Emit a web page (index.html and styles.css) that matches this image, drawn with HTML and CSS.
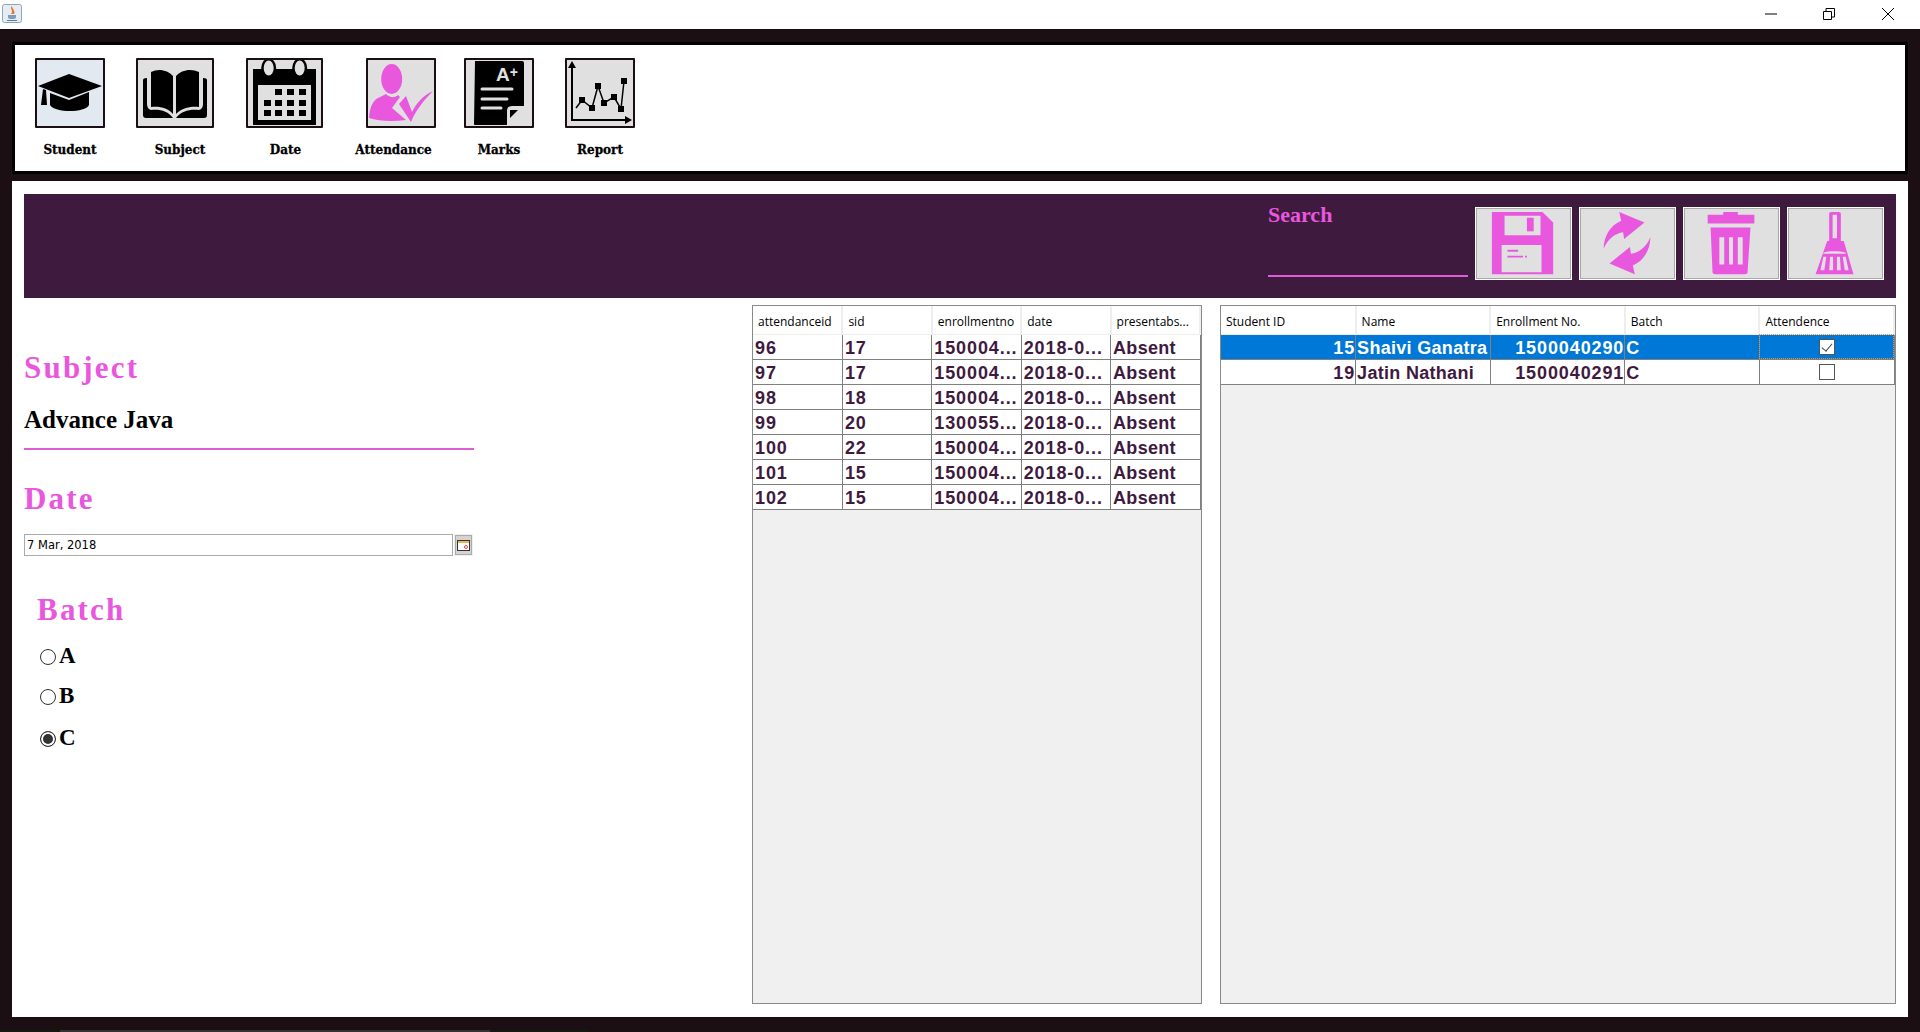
FILE: index.html
```html
<!DOCTYPE html>
<html lang="en">
    <head>
        <meta charset="UTF-8">
        <title>Attendance</title>
        <link rel="stylesheet" href="styles.css">
    </head>
    <body>
        <header class="titlebar">
            <svg class="app-icon" viewBox="0 0 20 19">
                <rect x="0.5" y="0.5" width="19" height="18" rx="2" fill="#e6ecf3" stroke="#8fa5bb"/>
                <path d="M10 2C7 5 12 6 9 10H12C14 7 10 5 10 2Z" fill="#e8782a"/>
                <path d="M6 11H14V13C14 15 12 15 10 15C8 15 6 15 6 13Z" fill="#7d9dbc"/>
                <path d="M5 16.500H15" stroke="#5d7fa0"/>
            </svg>
            <div class="win-controls">
                <svg viewBox="0 0 12 12"><path d="M0 6H12" stroke="#000"/></svg>
                <svg viewBox="0 0 12 12" fill="none" stroke="#000"><path d="M0.5 3.5H8.5V11.5H0.5Z"/><path d="M3 3.5V0.5H11.5V9H8.5"/></svg>
                <svg class="win-close" viewBox="0 0 12 12"><path d="M0 0L12 12M12 0L0 12" stroke="#000"/></svg>
            </div>
        </header>

        <nav class="toolbar">
            <div class="tool tool-student">
                <div class="tool-box box-light">
                    <svg viewBox="2 2 66 66">
                        <path d="M3 28L34 16L67 28L34 40Z"/>
                        <path d="M15 35L34 42L54 34V47C50 55 20 55 15 47Z"/>
                        <path d="M8 31L11 32L12 47H6Z"/>
                    </svg>
                </div>
                <span class="tool-label">Student</span>
            </div>
            <div class="tool tool-subject">
                <div class="tool-box">
                    <svg viewBox="2 2 74 66">
                        <path d="M15 14C22 10 32 12 37 18V56C32 50 24 48 15 49Z"/>
                        <path d="M40 18C45 12 55 10 63 14V49C54 48 46 50 40 56Z"/>
                        <path d="M7 22Q7 20 11 20V46Q11 51 15 52C24 51 32 53 37 60H10Q7 60 7 57Z"/>
                        <path d="M71 22Q71 20 67 20V46Q67 51 63 52C54 51 45 53 40 60H68Q71 60 71 57Z"/>
                    </svg>
                </div>
                <span class="tool-label">Subject</span>
            </div>
            <div class="tool tool-date">
                <div class="tool-box">
                    <svg viewBox="1 2 73 66">
                        <path d="M6 11H69V67H6Z"/>
                        <rect x="11" y="27" width="53" height="35" fill="#e0e0e0"/>
                        <path d="M28 8H47V10.500H28Z" fill="#e0e0e0"/>
                        <ellipse cx="21.700" cy="10" rx="7.500" ry="9.500" fill="#000"/>
                        <ellipse cx="21.700" cy="10" rx="5" ry="7.500" fill="#e0e0e0"/>
                        <ellipse cx="52.700" cy="10" rx="7.500" ry="9.500" fill="#000"/>
                        <ellipse cx="52.700" cy="10" rx="5" ry="7.500" fill="#e0e0e0"/>
                        <path d="M28 31h7v6h-7zM40 31h7v6h-7zM52 31h7v6h-7zM17 42h7v6h-7zM28 42h7v6h-7zM40 42h7v6h-7zM52 42h7v6h-7zM17 52h7v6h-7zM28 52h7v6h-7zM40 52h7v6h-7zM52 52h7v6h-7z"/>
                    </svg>
                </div>
                <span class="tool-label">Date</span>
            </div>
            <div class="tool tool-attendance">
                <div class="tool-box">
                    <svg viewBox="2 2 66 66" fill="#e957de">
                        <ellipse cx="25.700" cy="21" rx="10.500" ry="15"/>
                        <path d="M3 60C4 48 7 42 14 39L20 36C24 40 29 40 32 37L34 39L26 50L40 62C26 64 12 63 3 60Z"/>
                        <path d="M67 33C56 38 50 46 46 54L40 38L33 46L45 64C50 52 58 42 67 33Z"/>
                    </svg>
                </div>
                <span class="tool-label">Attendance</span>
            </div>
            <div class="tool tool-marks">
                <div class="tool-box">
                    <svg viewBox="2 2 66 66">
                        <path d="M11 3H58Q60 3 60 5V48H48Q43 48 43 53V67H11Q10 67 10 66Z"/>
                        <text x="32" y="23" class="grade">A<tspan class="grade-plus" dy="-4">+</tspan></text>
                        <path d="M18 31H48M18 41H43M18 50H37" stroke="#e0e0e0" stroke-width="3" stroke-linecap="round"/>
                        <path d="M46 52H54L46 60Z"/>
                    </svg>
                </div>
                <span class="tool-label">Marks</span>
            </div>
            <div class="tool tool-report">
                <div class="tool-box">
                    <svg viewBox="2 2 66 66">
                        <path d="M7 8V62H62" fill="none" stroke="#000" stroke-width="2"/>
                        <path d="M7 3L11 10H3ZM67 62L60 58V66Z"/>
                        <path d="M11 50L17 42L27 50L33 28L39 45L49 39L56 51L59 23" fill="none" stroke="#000" stroke-width="1.500"/>
                        <path d="M14 39h6v6h-6zM24 47h6v6h-6zM30 25h6v6h-6zM36 42h6v6h-6zM46 36h6v6h-6zM53 48h6v6h-6zM56 20h6v6h-6z"/>
                    </svg>
                </div>
                <span class="tool-label">Report</span>
            </div>
        </nav>

        <main class="main">
            <section class="band">
                <div class="search">
                    <label class="search-label" for="search">Search</label>
                    <input class="search-input" id="search" type="text">
                </div>
                <button class="action">
                    <svg viewBox="0 0 97 73" fill="#e957de">
                        <path d="M16 4H68L79 15V68H16Z"/>
                        <path d="M29 8H66V28H29ZM26 38H67V66H26Z" fill="#e0e0e0"/>
                        <path d="M52 10H59V24H52Z"/>
                        <path d="M32 43h11v2h-11zM32 49h16v2h-16zM50 49h2v2h-2z"/>
                    </svg>
                </button>
                <button class="action">
                    <svg viewBox="0 0 97 73" fill="#e957de">
                        <path d="M40 4L66 15L45 32L44 25C36 26 28 32 24 42C24 30 30 18 42 13Z"/>
                        <path d="M40 4L66 15L45 32L44 25C36 26 28 32 24 42C24 30 30 18 42 13Z" transform="rotate(180 48 36)"/>
                    </svg>
                </button>
                <button class="action">
                    <svg viewBox="0 0 97 73" fill="#e957de">
                        <path d="M40 4H55V7H72V16H24V7H40Z"/>
                        <path d="M27 20H68L65 66Q65 68 62 68H32Q29 68 29 66Z"/>
                        <path d="M36 30H41V58H36ZM46 30H50V58H46ZM55 30H60V58H55Z" fill="#e0e0e0"/>
                    </svg>
                </button>
                <button class="action">
                    <svg viewBox="0 0 97 73" fill="#e957de">
                        <path d="M44 4H52Q54 4 54 6V34H57L67 68H28L40 34H42V6Q42 4 44 4Z"/>
                        <path d="M45.500 7H50V31H45.500ZM36 46C42 44 52 44 59 46V47H36Z" fill="#e0e0e0"/>
                        <path d="M36 50L33 64H37L39 50ZM43 50L42 64H46V50ZM50 50V64H54L53 50ZM56 50L58 64H62L59 50Z" fill="#e0e0e0"/>
                    </svg>
                </button>
            </section>

            <section class="content">
                <div class="form">
                    <h2 class="form-title">Subject</h2>
                    <p class="subject-name">Advance Java</p>
                    <h2 class="form-title title-date">Date</h2>
                    <div class="date-field">
                        <input class="date-input" type="text" value="7 Mar, 2018">
                        <button class="date-btn">
                            <svg viewBox="0 0 13 11">
                                <rect x="0.500" y="0.500" width="12" height="10" fill="#fff" stroke="#333"/>
                                <path d="M1 1H12V3H1Z" fill="#e8b84a"/>
                                <circle cx="9" cy="7" r="1.500" fill="none" stroke="#e04040"/>
                            </svg>
                        </button>
                    </div>
                    <div class="batch">
                        <h2 class="form-title">Batch</h2>
                        <label class="batch-opt opt-a"><input type="radio" name="batch">A</label>
                        <label class="batch-opt opt-b"><input type="radio" name="batch">B</label>
                        <label class="batch-opt opt-c"><input type="radio" name="batch" checked>C</label>
                    </div>
                </div>

                <div class="grid grid-attendance">
                    <table>
                        <thead>
                            <tr><th>attendanceid</th><th>sid</th><th>enrollmentno</th><th>date</th><th>presentabs...</th></tr>
                        </thead>
                        <tbody>
                            <tr><td>96</td><td>17</td><td>150004...</td><td>2018-0...</td><td class="word">Absent</td></tr>
                            <tr><td>97</td><td>17</td><td>150004...</td><td>2018-0...</td><td class="word">Absent</td></tr>
                            <tr><td>98</td><td>18</td><td>150004...</td><td>2018-0...</td><td class="word">Absent</td></tr>
                            <tr><td>99</td><td>20</td><td>130055...</td><td>2018-0...</td><td class="word">Absent</td></tr>
                            <tr><td>100</td><td>22</td><td>150004...</td><td>2018-0...</td><td class="word">Absent</td></tr>
                            <tr><td>101</td><td>15</td><td>150004...</td><td>2018-0...</td><td class="word">Absent</td></tr>
                            <tr><td>102</td><td>15</td><td>150004...</td><td>2018-0...</td><td class="word">Absent</td></tr>
                        </tbody>
                    </table>
                </div>

                <div class="grid grid-students">
                    <table>
                        <thead>
                            <tr><th>Student ID</th><th>Name</th><th>Enrollment No.</th><th>Batch</th><th>Attendence</th></tr>
                        </thead>
                        <tbody>
                            <tr class="selected">
                                <td class="num">15</td><td class="word">Shaivi Ganatra</td><td class="num">1500040290</td><td class="word">C</td>
                                <td class="check focus"><input type="checkbox" checked></td>
                            </tr>
                            <tr>
                                <td class="num">19</td><td class="word">Jatin Nathani</td><td class="num">1500040291</td><td class="word">C</td>
                                <td class="check"><input type="checkbox"></td>
                            </tr>
                        </tbody>
                    </table>
                </div>
            </section>
        </main>

        <footer class="strip">
            <div class="strip-a"></div>
            <div class="strip-b"></div>
            <div class="strip-c"></div>
        </footer>
    </body>
</html>
```

FILE: styles.css
```css
* {
    padding: 0;
    margin: 0;
    box-sizing: border-box;
}

html, body {
    height: 1032px;
    overflow: hidden;
}

body {
    background-color: #1b0f14;
    font-family: "Liberation Sans", Arial, sans-serif;
}

.titlebar {
    height: 29px;
    background-color: #fff;
    display: flex;
    justify-content: space-between;
    padding: 4px 26px 0 2px;
}

.app-icon {
    width: 20px;
    height: 19px;
}

.win-controls {
    display: flex;
    gap: 46px;
    padding-top: 4px;
}

.win-controls svg {
    width: 12px;
    height: 12px;
    display: block;
}

.win-controls .win-close {
    margin-left: 1px;
}

/* top toolbar */
.toolbar {
    height: 132px;
    margin: 13px 12px 7px;
    background-color: #fff;
    border: 3px solid #000;
    padding: 13px 0 0 20px;
    display: flex;
}

.tool {
    display: flex;
    flex-direction: column;
    align-items: center;
    height: 100%;
}

.tool-box {
    height: 70px;
    width: 100%;
    flex-shrink: 0;
    background-color: #e0e0e0;
    border: 2px solid #1b0f14;
    border-radius: 1px;
}

.box-light {
    background-color: #e3e9f0;
}

.tool-box svg {
    display: block;
    width: 100%;
    height: 100%;
}

.tool-label {
    margin-top: 14px;
    font-family: "DejaVu Serif", serif;
    font-weight: bold;
    font-size: 12px;
    line-height: 16px;
    color: #000;
    white-space: nowrap;
    -webkit-text-stroke: 0.3px #000;
}

.tool-student { width: 70px; }
.tool-subject { width: 78px; margin-left: 31px; }
.tool-date { width: 77px; margin-left: 32px; }
.tool-attendance { width: 70px; margin-left: 43px; }
.tool-marks { width: 70px; margin-left: 28px; }
.tool-report { width: 70px; margin-left: 31px; }

.tool-subject .tool-label { margin-left: 10px; }
.tool-date .tool-label { margin-left: 2px; }
.tool-attendance .tool-label { margin-right: 15px; }

.grade {
    font-family: "Liberation Sans", sans-serif;
    font-weight: bold;
    font-size: 19px;
    fill: #e0e0e0;
}

.grade-plus {
    font-size: 14px;
}

/* main panel */
.main {
    height: 836px;
    margin: 0 12px 13px;
    background-color: #fff;
    padding: 13px 12px 0;
}

.band {
    height: 104px;
    background-color: #3f1a3f;
    display: flex;
    padding: 13px 12px 0 0;
    gap: 7px;
    justify-content: flex-end;
}

.search {
    width: 200px;
    height: 70px;
    display: flex;
    flex-direction: column;
    justify-content: space-between;
}

.search-label {
    font-family: "Liberation Serif", serif;
    font-weight: bold;
    font-size: 22px;
    line-height: 24px;
    color: #e957de;
    margin-top: -4px;
}

.search-input {
    width: 100%;
    height: 24px;
    background: transparent;
    border: 0;
    border-bottom: 2px solid #e05cd5;
    outline: 0;
}

.action {
    width: 97px;
    height: 73px;
    background-color: #e0e0e0;
    border: 1px solid #fff;
    box-shadow: inset 0 0 0 1px #a8a8a8;
}

.action svg {
    display: block;
    width: 95px;
    height: 71px;
}

.content {
    margin-top: 7px;
    height: 699px;
    display: flex;
}

.form {
    width: 450px;
    margin-right: 278px;
}

.form-title {
    font-family: "Liberation Serif", serif;
    font-weight: bold;
    font-size: 31px;
    line-height: 36px;
    letter-spacing: 2.200px;
    color: #e957de;
}

.form > .form-title:first-child {
    margin-top: 45px;
}

.subject-name {
    font-family: "Liberation Serif", serif;
    font-weight: bold;
    font-size: 25px;
    line-height: 30px;
    color: #000;
    margin-top: 19px;
    padding-bottom: 13px;
    border-bottom: 2px solid #e05cd5;
}

.title-date {
    margin-top: 31px;
}

.date-field {
    display: flex;
    margin-top: 17px;
    height: 22px;
}

.date-input {
    width: 429px;
    height: 22px;
    border: 1px solid #aaa;
    padding-left: 2px;
    font-family: "DejaVu Sans", sans-serif;
    font-size: 11.500px;
    color: #000;
    outline: 0;
}

.date-btn {
    width: 19px;
    height: 22px;
    margin-left: 1px;
    border: 1px solid #f0f0f0;
    background-color: #d4d4d4;
    box-shadow: inset 0 0 0 1px #aaa;
    display: flex;
    align-items: center;
    justify-content: center;
}

.date-btn svg {
    width: 13px;
    height: 11px;
}

.batch {
    margin-top: 36px;
    padding-left: 13px;
}

.batch-opt {
    display: flex;
    align-items: center;
    height: 30px;
    font-family: "Liberation Serif", serif;
    font-weight: bold;
    font-size: 23px;
    color: #000;
}

.opt-a { margin-top: 13px; }
.opt-b { margin-top: 10px; }
.opt-c { margin-top: 12px; }

.batch-opt input {
    appearance: none;
    width: 16px;
    height: 16px;
    margin: 2px 3px 0 3px;
    border: 1px solid #333;
    border-radius: 50%;
    background-color: #fff;
}

.batch-opt input:checked {
    background-color: #333;
    box-shadow: inset 0 0 0 2px #fff;
}

/* tables */
.grid {
    height: 699px;
    background-color: #f0f0f0;
    border: 1px solid #8a8a8a;
}

.grid-attendance {
    width: 450px;
    margin-right: 18px;
}

.grid-students {
    width: 676px;
}

.grid table {
    border-collapse: collapse;
    table-layout: fixed;
    width: 100%;
    background-color: #fff;
}

.grid th {
    height: 28px;
    font-family: "Open Sans", sans-serif;
    font-weight: normal;
    font-size: 12px;
    color: #000;
    text-align: left;
    padding: 3px 0 0 5px;
    background-color: #fff;
    border-right: 2px solid #eee;
    border-bottom: 1px solid #eee;
}

.grid td {
    height: 25px;
    font-weight: bold;
    font-size: 18px;
    line-height: 20px;
    letter-spacing: 0.900px;
    color: #3f1a3f;
    padding: 3px 1px 0 2px;
    white-space: nowrap;
    overflow: hidden;
    border-right: 1px solid #808080;
    border-bottom: 1px solid #808080;
}

.grid td.word {
    letter-spacing: 0.300px;
}

.grid-students td.word {
    padding-left: 1px;
}

.grid td.num {
    text-align: right;
    padding-right: 0;
}

.selected td {
    background-color: #0078d7;
    color: #fff;
}

.grid td.check {
    text-align: center;
    padding: 0;
}

.grid td.focus {
    outline: 1px dotted #f09030;
    outline-offset: -1px;
}

.check input {
    appearance: none;
    display: block;
    margin: 0 auto;
    width: 16px;
    height: 16px;
    background-color: #fff;
    border: 1px solid #555;
}

.check input:checked {
    position: relative;
}

.check input:checked::after {
    content: "";
    position: absolute;
    left: 4px;
    top: 1px;
    width: 5px;
    height: 9px;
    border: solid #444;
    border-width: 0 1px 1px 0;
    transform: rotate(40deg);
}

.strip {
    height: 2px;
    display: flex;
}

.strip-a {
    width: 60px;
    background-color: #14180f;
}

.strip-b {
    width: 430px;
    background-color: #333;
}

.strip-c {
    width: 100px;
    background-color: #14180f;
}
```
